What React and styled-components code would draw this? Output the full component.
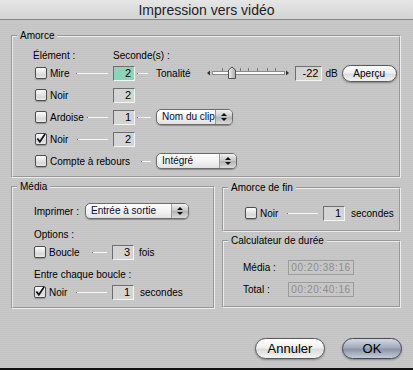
import React from 'react';
import styled, { createGlobalStyle } from 'styled-components';

const GlobalStyle = createGlobalStyle`
  html, body {
    margin: 0;
    padding: 0;
    background: #c6c6c6;
  }
  body {
    font-family: "Liberation Sans", Arial, sans-serif;
    font-size: 10px;
    color: #000;
  }
`;

const Window = styled.div`
  width: 413px;
  height: 370px;
  box-sizing: border-box;
  display: flex;
  flex-direction: column;
  background: repeating-linear-gradient(0deg, #c8c8c8 0 1px, #c4c4c4 1px 2px);
  border-bottom: 2px solid #111;
  overflow: hidden;
`;

const TitleBar = styled.div`
  height: 19px;
  flex: none;
  border-bottom: 1px solid #8a8a8a;
  background: linear-gradient(#e6e6e6, #d3d3d3);
  display: flex;
  align-items: center;
  justify-content: center;
  font-size: 14px;
  color: #1e1e1e;
`;

const Body = styled.div`
  flex: 1;
  padding: 10px 12px 0 11px;
  display: flex;
  flex-direction: column;
`;

const Group = styled.fieldset`
  margin: 0;
  padding: 0;
  min-width: 0;
  width: ${p => (p.$w ? `${p.$w}px` : 'auto')};
  box-sizing: border-box;
  border: 2px groove #ececec;
`;

const Legend = styled.legend`
  margin-left: 4px;
  padding: 0 3px;
  line-height: 12px;
  font-size: 10px;
`;

const Inner = styled.div`
  padding: ${p => p.$pad};
  display: flex;
  flex-direction: column;
`;

const Row = styled.div`
  display: flex;
  align-items: center;
  height: ${p => p.$h || 22}px;
  margin-top: ${p => p.$mt || 0}px;
  padding-left: ${p => p.$indent || 0}px;
  white-space: nowrap;
`;

const Cell = styled.span`
  width: ${p => p.$w}px;
  flex: none;
`;

const Lead = styled.div`
  display: flex;
  align-items: center;
  width: ${p => p.$w || 73}px;
  margin-right: 5px;
  flex: none;
`;

const Box = styled.span`
  width: 12px;
  height: 12px;
  box-sizing: border-box;
  border: 1px solid #4e4e4e;
  border-radius: 2px;
  background: linear-gradient(#fdfdfd, #d8d8d8 70%, #eaeaea);
  box-shadow: 0 1px 1px rgba(0, 0, 0, 0.25);
  margin-right: 3px;
  flex: none;
  display: flex;
  align-items: center;
  justify-content: center;
`;

const Leader = styled.span`
  flex: ${p => (p.$w ? 'none' : 1)};
  width: ${p => (p.$w ? `${p.$w}px` : 'auto')};
  height: 1px;
  margin-left: ${p => p.$ml || 0}px;
  margin-right: ${p => p.$mr || 0}px;
  background: #f8f8f8;
  border-left: 1px solid #7a7a7a;
`;

const Field = styled.span`
  width: ${p => p.$w || 22}px;
  height: 15px;
  box-sizing: border-box;
  flex: none;
  border-top: 1px solid #6e6e6e;
  border-left: 1px solid #6e6e6e;
  border-right: 1px solid #f4f4f4;
  border-bottom: 1px solid #f4f4f4;
  background: ${p => (p.$focus ? '#8ed3bb' : '#d4d4d4')};
  text-align: right;
  padding-right: 3px;
  line-height: 13px;
  font-size: 11px;
`;

const Text = styled.span`
  margin-left: ${p => p.$ml || 0}px;
`;

const Popup = styled.div`
  width: ${p => p.$w}px;
  height: 16px;
  box-sizing: border-box;
  flex: none;
  display: flex;
  border: 1px solid #6c6c6c;
  border-radius: 5px;
  overflow: hidden;
  background: linear-gradient(#ffffff, #f0f0f0 60%, #e2e2e2);
  box-shadow: 0 1px 1px rgba(0, 0, 0, 0.3);
  margin-left: ${p => p.$ml || 0}px;
`;

const PopupText = styled.span`
  flex: 1;
  padding-left: 5px;
  line-height: 14px;
  color: #0a0a30;
`;

const PopupArrows = styled.span`
  width: 16px;
  border-left: 1px solid #9a9a9a;
  background: linear-gradient(#f2f2f2, #c4c4c4 50%, #b2b2b2 51%, #dcdcdc);
  display: flex;
  flex-direction: column;
  align-items: center;
  justify-content: center;
  gap: 2px;
`;

const Tri = styled.span`
  width: 0;
  height: 0;
  border-left: 3px solid transparent;
  border-right: 3px solid transparent;
  ${p => (p.$down ? 'border-top: 3px solid #111;' : 'border-bottom: 3px solid #111;')}
`;

const PillButton = styled.button`
  width: ${p => p.$w}px;
  height: ${p => p.$h}px;
  margin: 0;
  margin-left: ${p => p.$ml || 0}px;
  padding: 0;
  flex: none;
  border: 1px solid ${p => (p.$default ? '#434a58' : '#585858')};
  border-radius: ${p => p.$h / 2}px;
  font-family: "Liberation Sans", Arial, sans-serif;
  font-size: ${p => p.$fs}px;
  color: #000;
  background: ${p =>
    p.$default
      ? 'linear-gradient(#d4dae4, #a2abbb 45%, #8c96a8 55%, #c4ccd8)'
      : 'linear-gradient(#ffffff, #f0f0f0 45%, #dcdcdc 55%, #f4f4f4)'};
  box-shadow: 0 1px 2px rgba(0, 0, 0, 0.35);
`;

const DurationField = styled.span`
  width: 66px;
  height: 15px;
  box-sizing: border-box;
  border: 1px solid #9c9c9c;
  color: #8c8c8c;
  text-align: center;
  line-height: 13px;
  letter-spacing: 0.6px;
  font-size: 10px;
`;

const Lower = styled.div`
  display: flex;
  gap: 7px;
  margin-top: 3px;
  align-items: flex-start;
`;

const RightCol = styled.div`
  display: flex;
  flex-direction: column;
  gap: 3px;
  width: 179px;
  margin-top: 1px;
`;

const ButtonRow = styled.div`
  display: flex;
  justify-content: flex-end;
  margin-top: 29px;
  margin-right: -1px;
`;

const Check = ({ checked }) => (
  <Box>
    {checked && (
      <svg width="11" height="11" viewBox="0 0 11 11" style={{ marginTop: -2 }}>
        <path d="M1.5 5.5 L4.2 9 L10 0.5" fill="none" stroke="#101020" strokeWidth="1.9" />
      </svg>
    )}
  </Box>
);

const Select = ({ w, label, ml }) => (
  <Popup $w={w} $ml={ml}>
    <PopupText>{label}</PopupText>
    <PopupArrows>
      <Tri />
      <Tri $down />
    </PopupArrows>
  </Popup>
);

const Slider = () => (
  <svg width="86" height="14" viewBox="0 0 86 14" style={{ marginLeft: 15, marginRight: 4, flex: 'none' }}>
    <defs>
      <linearGradient id="thumb" x1="0" x2="1">
        <stop offset="0" stopColor="#f4f4f4" />
        <stop offset="1" stopColor="#a8a8a8" />
      </linearGradient>
    </defs>
    <polygon points="2,7 5,4.5 5,9.5" fill="#333" />
    <rect x="7.5" y="5.5" width="72" height="3" fill="#fafafa" stroke="#8a8a8a" />
    {[17, 26, 35, 43, 52, 62, 70].map(x => (
      <line key={x} x1={x + 0.5} x2={x + 0.5} y1="2" y2="5" stroke="#7a7a7a" />
    ))}
    <polygon points="23.5,4 27,1 30.5,4 30.5,12.5 23.5,12.5" fill="url(#thumb)" stroke="#505050" />
    <polygon points="81,4.5 84,7 81,9.5" fill="#333" />
  </svg>
);

const App = () => {
  return (
    <>
      <GlobalStyle />
      <Window>
        <TitleBar>Impression vers vidéo</TitleBar>
        <Body>
          <Group>
            <Legend>Amorce</Legend>
            <Inner $pad="7px 0 4px 20px">
              <Row $h={13}>
                <Cell $w={80}>Élément :</Cell>
                <Cell $w={80}>Seconde(s) :</Cell>
              </Row>
              <Row $indent={2}>
                <Lead>
                  <Check />
                  <span>Mire</span>
                  <Leader $ml={7} />
                </Lead>
                <Field $focus>2</Field>
                <Leader $w={10} $ml={2} $mr={8} />
                <span>Tonalité</span>
                <Slider />
                <Field $w={27}>-22</Field>
                <Text $ml={3}>dB</Text>
                <PillButton $w={55} $h={17} $fs={10} $ml={4}>Aperçu</PillButton>
              </Row>
              <Row $indent={2}>
                <Lead>
                  <Check />
                  <span>Noir</span>
                </Lead>
                <Field>2</Field>
              </Row>
              <Row $indent={2}>
                <Lead>
                  <Check />
                  <span>Ardoise</span>
                  <Leader $ml={3} />
                </Lead>
                <Field>1</Field>
                <Leader $w={13} $ml={2} $mr={5} />
                <Select w={77} label="Nom du clip" />
              </Row>
              <Row $indent={2}>
                <Lead>
                  <Check checked />
                  <span>Noir</span>
                  <Leader $ml={9} />
                </Lead>
                <Field>2</Field>
              </Row>
              <Row $indent={2}>
                <Check />
                <span>Compte à rebours</span>
                <Leader $w={9} $ml={11} $mr={5} />
                <Select w={81} label="Intégré" />
              </Row>
            </Inner>
          </Group>

          <Lower>
            <Group $w={204}>
              <Legend>Média</Legend>
              <Inner $pad="0 0 4px 21px">
                <Row $h={20} $mt={8}>
                  <Cell $w={51}>Imprimer :</Cell>
                  <Select w={104} label="Entrée à sortie" />
                </Row>
                <Row $h={14} $mt={6}>Options :</Row>
                <Row>
                  <Lead>
                    <Check />
                    <span>Boucle</span>
                    <Leader $ml={12} />
                  </Lead>
                  <Field>3</Field>
                  <Text $ml={5}>fois</Text>
                </Row>
                <Row $h={14} $mt={4}>Entre chaque boucle :</Row>
                <Row>
                  <Lead>
                    <Check checked />
                    <span>Noir</span>
                    <Leader $ml={9} />
                  </Lead>
                  <Field>1</Field>
                  <Text $ml={6}>secondes</Text>
                </Row>
              </Inner>
            </Group>

            <RightCol>
              <Group>
                <Legend>Amorce de fin</Legend>
                <Inner $pad="0 0 6px 21px">
                  <Row $mt={8}>
                    <Lead>
                      <Check />
                      <span>Noir</span>
                      <Leader $ml={9} />
                    </Lead>
                    <Field>1</Field>
                    <Text $ml={6}>secondes</Text>
                  </Row>
                </Inner>
              </Group>
              <Group>
                <Legend>Calculateur de durée</Legend>
                <Inner $pad="0 0 8px 19px">
                  <Row $h={18} $mt={11}>
                    <Cell $w={45}>Média :</Cell>
                    <DurationField>00:20:38:16</DurationField>
                  </Row>
                  <Row $h={18} $mt={4}>
                    <Cell $w={45}>Total :</Cell>
                    <DurationField>00:20:40:16</DurationField>
                  </Row>
                </Inner>
              </Group>
            </RightCol>
          </Lower>

          <ButtonRow>
            <PillButton $w={70} $h={21} $fs={13}>Annuler</PillButton>
            <PillButton $w={60} $h={21} $fs={13} $ml={17} $default>OK</PillButton>
          </ButtonRow>
        </Body>
      </Window>
    </>
  );
};

export default App;
